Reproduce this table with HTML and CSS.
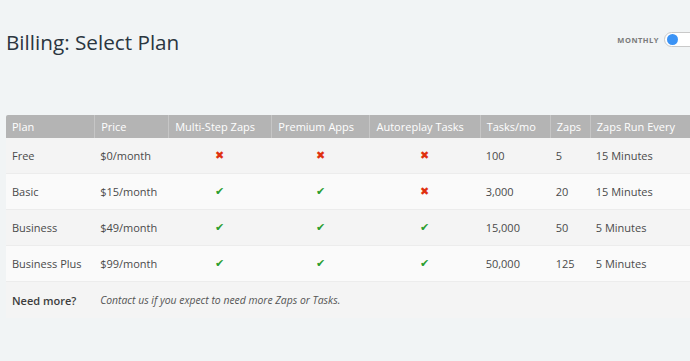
FILE: index.html
```html
<!DOCTYPE html>
<html lang="en">
<head>
    <meta charset="UTF-8">
    <title>Billing: Select Plan</title>
    <link rel="stylesheet" href="styles.css">
</head>
<body>
    <div class="page">
        <div class="top">
            <h1>Billing: Select Plan</h1>
            <div class="billing-toggle">
                <span class="toggle-label">Monthly</span>
                <span class="switch"><span class="knob"></span></span>
            </div>
        </div>

        <table class="plans">
            <colgroup>
                <col style="width:88px">
                <col style="width:74px">
                <col style="width:103px">
                <col style="width:98px">
                <col style="width:110px">
                <col style="width:70px">
                <col style="width:40px">
                <col style="width:120px">
            </colgroup>
            <thead>
                <tr>
                    <th>Plan</th>
                    <th>Price</th>
                    <th>Multi-Step Zaps</th>
                    <th>Premium Apps</th>
                    <th>Autoreplay Tasks</th>
                    <th>Tasks/mo</th>
                    <th>Zaps</th>
                    <th>Zaps Run Every</th>
                </tr>
            </thead>
            <tbody>
                <tr>
                    <td>Free</td>
                    <td>$0/month</td>
                    <td class="mark"><span class="no">&#10006;</span></td>
                    <td class="mark"><span class="no">&#10006;</span></td>
                    <td class="mark"><span class="no">&#10006;</span></td>
                    <td>100</td>
                    <td>5</td>
                    <td>15 Minutes</td>
                </tr>
                <tr>
                    <td>Basic</td>
                    <td>$15/month</td>
                    <td class="mark"><span class="yes">&#10004;</span></td>
                    <td class="mark"><span class="yes">&#10004;</span></td>
                    <td class="mark"><span class="no">&#10006;</span></td>
                    <td>3,000</td>
                    <td>20</td>
                    <td>15 Minutes</td>
                </tr>
                <tr>
                    <td>Business</td>
                    <td>$49/month</td>
                    <td class="mark"><span class="yes">&#10004;</span></td>
                    <td class="mark"><span class="yes">&#10004;</span></td>
                    <td class="mark"><span class="yes">&#10004;</span></td>
                    <td>15,000</td>
                    <td>50</td>
                    <td>5 Minutes</td>
                </tr>
                <tr>
                    <td>Business Plus</td>
                    <td>$99/month</td>
                    <td class="mark"><span class="yes">&#10004;</span></td>
                    <td class="mark"><span class="yes">&#10004;</span></td>
                    <td class="mark"><span class="yes">&#10004;</span></td>
                    <td>50,000</td>
                    <td>125</td>
                    <td>5 Minutes</td>
                </tr>
                <tr class="more">
                    <td class="more-title">Need more?</td>
                    <td colspan="7"><em>Contact us if you expect to need more Zaps or Tasks.</em></td>
                </tr>
            </tbody>
        </table>
    </div>
</body>
</html>
```

FILE: styles.css
```css
body {
    margin: 0;
    background: #f1f4f5;
    font-family: 'Open Sans', sans-serif;
    color: #4a4a4a;
    overflow: hidden;
}
.page {
    padding: 0 0 0 6px;
}
.top {
    display: flex;
    justify-content: space-between;
    align-items: flex-start;
    height: 115px;
}
h1 {
    margin: 28px 0 0;
    font-size: 20.7px;
    font-weight: 400;
    color: #2b3640;
    line-height: 28px;
}
.billing-toggle {
    display: flex;
    align-items: center;
    margin-top: 32px;
    margin-right: -12px;
}
.toggle-label {
    font-size: 7.5px;
    font-weight: 700;
    letter-spacing: 0.5px;
    text-transform: uppercase;
    color: #7a7a7a;
    margin-right: 5px;
}
.switch {
    display: flex;
    align-items: center;
    width: 38px;
    height: 15px;
    box-sizing: border-box;
    border: 1px solid #c9c9c9;
    border-radius: 8px;
    background: #fff;
    padding-left: 2px;
}
.knob {
    width: 11px;
    height: 11px;
    border-radius: 50%;
    background: #3b93f5;
}
.plans {
    width: 704px;
    table-layout: fixed;
    border-collapse: separate;
    border-spacing: 0;
    font-size: 11px;
}
.plans th {
    background: #b4b4b4;
    color: #fff;
    font-weight: 400;
    font-size: 11px;
    text-align: left;
    padding: 3px 6px 2px;
    line-height: 18px;
    border-left: 1px solid #c6c6c6;
    white-space: nowrap;
}
.plans th:first-child {
    border-left: none;
    border-top-left-radius: 2px;
}
.plans td {
    padding: 9px 6px 9px;
    line-height: 17px;
    border-bottom: 1px solid #ececec;
    background: #fafafa;
    white-space: nowrap;
}
.plans tbody tr:nth-child(odd) td {
    background: #f4f4f4;
}
.plans td.mark {
    text-align: center;
    font-size: 10.5px;
}
.no {
    color: #e0300f;
}
.yes {
    color: #2a9e2f;
}
.more-title {
    font-weight: 600;
    color: #3d3d3d;
}
.more td {
    border-bottom: none;
}
.more em {
    color: #555;
    font-size: 10.4px;
}
```
